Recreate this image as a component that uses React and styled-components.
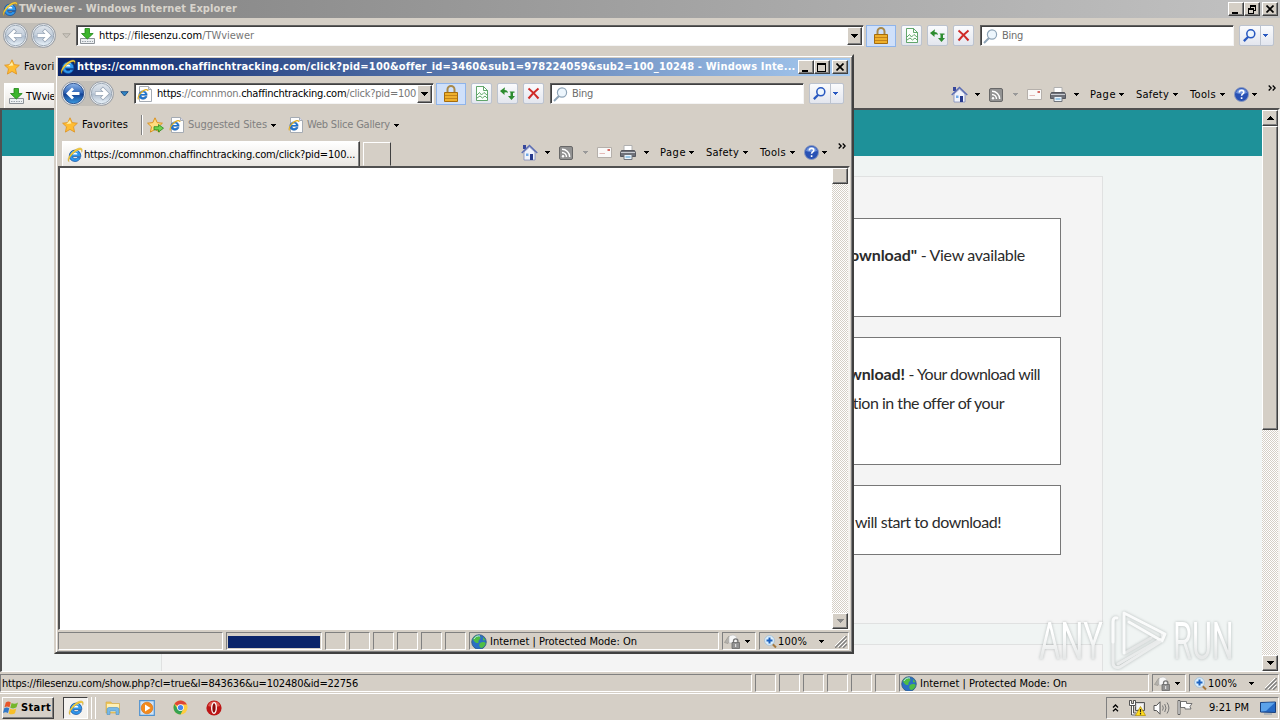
import React, { useLayoutEffect, useRef } from "react";
import styled, { createGlobalStyle, css } from "styled-components";

const FACE = "#d5cfc6";
const UI = `"DejaVu Sans Condensed", "DejaVu Sans", sans-serif`;

const Global = createGlobalStyle`
  * { box-sizing: border-box; }
  html, body { margin: 0; padding: 0; overflow: hidden; background: ${FACE}; }
  svg { display: block; flex: none; }
`;

/* ---------- text ---------- */
const TextSpan = styled.span`
  display: inline-block;
  white-space: pre;
  flex: none;
  color: ${(p) => p.$color || "inherit"};
  font-weight: ${(p) => (p.$bold ? 700 : "inherit")};
`;

function Text({ width, children, color, bold }) {
  const ref = useRef(null);
  useLayoutEffect(() => {
    const el = ref.current;
    el.style.letterSpacing = "0px";
    const natural = el.getBoundingClientRect().width;
    el.style.letterSpacing = `${(width - natural) / el.textContent.length}px`;
  }, [width]);
  return (
    <TextSpan ref={ref} $color={color} $bold={bold}>
      {children}
    </TextSpan>
  );
}

/* ---------- bevels ---------- */
const raised = css`
  border: 1px solid;
  border-color: #fff #404040 #404040 #fff;
  box-shadow: inset -1px -1px 0 #808080;
`;
const sunken = css`
  border: 1px solid;
  border-color: #808080 #fff #fff #808080;
`;

/* ---------- layout parts ---------- */
const Desktop = styled.div`
  position: relative;
  width: 1280px;
  height: 720px;
  overflow: hidden;
  display: flex;
  flex-direction: column;
  background: ${FACE};
  font: 11px/14px ${UI};
  color: #000;
`;
const PopupFrame = styled.div`
  position: absolute;
  left: 54px;
  top: 54px;
  width: 800px;
  height: 600px;
  padding: 2px;
  background: ${FACE};
  border: 2px solid;
  border-color: ${FACE} #404040 #404040 ${FACE};
  box-shadow: inset 1px 1px 0 #fff, inset -1px -1px 0 #808080;
`;
const Window = styled.div`
  display: flex;
  flex-direction: column;
  width: 100%;
  height: ${(p) => p.$height}px;
  background: ${FACE};
`;
const TitleBar = styled.div`
  display: flex;
  align-items: center;
  height: 18px;
  flex: none;
  padding: 0 2px;
  color: ${(p) => (p.$active ? "#fff" : "#d8d4cc")};
  background: ${(p) =>
    p.$active ? "linear-gradient(90deg,#0a246a,#a6caf0)" : "linear-gradient(90deg,#808080,#c2c2c2)"};
`;
const TitleText = styled.div`
  flex: 1;
  margin-left: 1px;
`;
const CaptionButton = styled.div`
  ${raised}
  width: 16px;
  height: 14px;
  margin-left: ${(p) => p.$gap || 0}px;
  background: ${FACE};
  display: flex;
  align-items: center;
  justify-content: center;
`;
const NavRow = styled.div`
  display: flex;
  align-items: center;
  height: 34px;
  flex: none;
  padding: 1px 6px 0 3px;
`;
const TravelButtons = styled.div`
  width: 53px;
  display: flex;
  gap: 3px;
  border-radius: 13px;
  background: #c3bfb8;
`;
const RecentArrow = styled.div`
  width: 20px;
  display: flex;
  justify-content: center;
`;
const Field = styled.div`
  display: flex;
  align-items: center;
  height: 21px;
  background: #fff;
  border: 1px solid;
  border-color: #606060 #f4f4f4 #f4f4f4 #606060;
  box-shadow: inset 1px 1px 0 #404040;
`;
const AddressField = styled(Field)`
  flex: 1;
  min-width: 0;
  padding: 1px 1px 0 2px;
`;
const AddressText = styled.div`
  flex: 1;
  margin-left: ${(p) => p.$gap}px;
  overflow: hidden;
  min-width: 0;
`;
const DropButton = styled.div`
  ${raised}
  width: 15px;
  height: 18px;
  background: ${FACE};
  display: flex;
  align-items: center;
  justify-content: center;
`;
const LockButton = styled.div`
  width: 30px;
  height: 22px;
  margin: 0 5px 0 2px;
  border: 1px solid #8fb4ea;
  background: #cfe0fa;
  display: flex;
  align-items: center;
  justify-content: center;
`;
const ToolButton = styled.div`
  width: 21px;
  height: 21px;
  margin-right: ${(p) => p.$gap ?? 5}px;
  border: 1px solid #bcc3cf;
  border-radius: 2px;
  background: linear-gradient(#fafbfd, #e3e6ee);
  display: flex;
  align-items: center;
  justify-content: center;
`;
const SearchField = styled(Field)`
  width: 254px;
  padding: 1px 0 0 2px;
  color: #6d6d6d;
  gap: 4px;
`;
const SearchButton = styled(ToolButton)`
  width: 35px;
  margin: 0 0 0 5px;
  justify-content: space-between;
  padding: 0 5px 0 3px;
  background: linear-gradient(90deg, transparent 20px, #bcc3cf 20px 21px, transparent 21px), linear-gradient(#fafbfd, #e3e6ee);
`;
const FavRow = styled.div`
  display: flex;
  align-items: center;
  height: 30px;
  flex: none;
  padding-left: 4px;
  color: #000;
`;
const FavItem = styled.div`
  display: flex;
  align-items: center;
  gap: ${(p) => p.$gap ?? 4}px;
  margin-right: ${(p) => p.$after || 0}px;
`;
const Divider = styled.div`
  width: 2px;
  height: 20px;
  margin-right: 4px;
  border-left: 1px solid #808080;
  border-right: 1px solid #fff;
`;
const TabRow = styled.div`
  display: flex;
  align-items: flex-end;
  justify-content: space-between;
  height: 26px;
  flex: none;
  padding-left: 4px;
`;
const Tabs = styled.div`
  display: flex;
  align-items: flex-end;
  gap: 3px;
`;
const Tab = styled.div`
  width: 298px;
  height: 25px;
  display: flex;
  align-items: center;
  gap: ${(p) => p.$gap}px;
  padding: 1px 0 0 ${(p) => p.$pad}px;
  background: linear-gradient(#fff, #e9e6e1);
  border: 1px solid;
  border-bottom: 0;
  border-color: #fff #404040 #fff #fff;
  box-shadow: inset -1px 0 0 #808080;
`;
const NewTab = styled.div`
  width: 28px;
  height: 24px;
  border: 1px solid;
  border-color: #fff #404040 transparent #fff;
`;
const CommandBar = styled.div`
  display: flex;
  align-items: center;
  height: 26px;
  padding: 0 4px 1px 0;
`;
const Command = styled.div`
  display: flex;
  align-items: center;
  justify-content: space-between;
  width: ${(p) => p.$width}px;
  margin-right: ${(p) => p.$after}px;
`;
const Overflow = styled.div`
  align-self: flex-start;
  padding-top: 3px;
`;
const Content = styled.div`
  flex: 1;
  display: flex;
  min-height: 0;
  border: 2px solid;
  border-bottom-width: 1px;
  border-color: #505050 #f4f2ee #fff #505050;
  background: #fff;
`;
const View = styled.div`
  flex: 1;
  overflow: hidden;
  min-width: 0;
`;
const Track = styled.div`
  width: 16px;
  display: flex;
  flex-direction: column;
  background: conic-gradient(#fff 25%, ${FACE} 0 50%, #fff 0 75%, ${FACE} 0) 0 0 / 2px 2px;
`;
const ScrollButton = styled.div`
  ${raised}
  height: ${(p) => p.$height || 16}px;
  margin-top: ${(p) => (p.$end ? "auto" : 0)};
  background: ${FACE};
  display: flex;
  align-items: center;
  justify-content: center;
  flex: none;
`;
const StatusBar = styled.div`
  display: flex;
  gap: 3px;
  height: 20px;
  padding: 2px 1px 0 0;
  flex: none;
`;
const Pane = styled.div`
  ${sunken}
  height: 18px;
  display: flex;
  align-items: center;
  flex: none;
  width: ${(p) => p.$width}px;
  padding: 1px 1px 0;
  ${(p) => p.$grow && "flex: 1;"}
  overflow: hidden;
  gap: ${(p) => p.$gap || 0}px;
`;
const Spacer = styled.div`
  flex: 1;
  max-width: ${(p) => p.$max || 40}px;
`;
const Progress = styled.div`
  width: 92px;
  height: 12px;
  background: #0a246a;
`;

/* ---------- web page ---------- */
const Page = styled.div`
  height: 561px;
  background: #f0f4f3;
  display: flex;
  flex-direction: column;
  align-items: center;
  overflow: hidden;
`;
const Banner = styled.div`
  width: 100%;
  height: 46px;
  flex: none;
  background: #1e9199;
  margin-bottom: 20px;
`;
const Panel = styled.div`
  width: 942px;
  height: ${(p) => p.$height}px;
  flex: none;
  margin-bottom: 20px;
  padding: 41px 41px 0;
  background: #f4f4f4;
  border: 1px solid #e0e1e1;
  display: flex;
  flex-direction: column;
  gap: 20px;
`;
const Step = styled.div`
  height: ${(p) => p.$height}px;
  border: 1px solid #777;
  background: #fff;
  padding-top: 21px;
  display: flex;
  flex-direction: column;
  font: 16px/29px Lato, sans-serif;
  color: #2b2b2b;
`;
const Line = styled.div`
  display: flex;
  justify-content: flex-end;
  padding-right: ${(p) => p.$right}px;
`;

/* ---------- taskbar ---------- */
const Taskbar = styled.div`
  height: 27px;
  margin-top: 1px;
  border-top: 1px solid #fff;
  display: flex;
  align-items: center;
  padding: 1px 1px 0 2px;
`;
const StartButton = styled.div`
  ${raised}
  width: 52px;
  height: 22px;
  display: flex;
  align-items: center;
  gap: 1px;
`;
const RunningApp = styled.div`
  ${sunken}
  border-color: #404040 #fff #fff #404040;
  width: 25px;
  height: 22px;
  margin-left: 9px;
  background: #f4f2ef;
  display: flex;
  align-items: center;
  justify-content: center;
`;
const Stack = styled.div`
  width: 4px;
  height: 22px;
  border-right: 1px solid #fff;
`;
const Launchers = styled.div`
  display: flex;
  align-items: center;
  gap: 18px;
  margin-left: 9px;
  flex: 1;
`;
const Tray = styled.div`
  ${sunken}
  width: 173px;
  height: 22px;
  display: flex;
  align-items: center;
  padding-left: 5px;
`;
const TrayItem = styled.div`
  width: ${(p) => p.$width}px;
  display: flex;
`;

/* ---------- watermark ---------- */
const Watermark = styled.div`
  position: absolute;
  left: 1039px;
  top: 608px;
  display: flex;
  align-items: center;
  height: 66px;
  filter: drop-shadow(0 0 1.5px rgba(70, 80, 80, 0.35));
`;
const MarkWord = styled.div`
  width: ${(p) => p.$width}px;
  padding-top: 2px;
  font: 400 52px/66px Roboto, sans-serif;
  white-space: nowrap;
  transform: scaleX(${(p) => p.$scale});
  transform-origin: left center;
`;
const MarkText = styled.span`
  color: transparent;
  background: linear-gradient(#fff 35%, #e6e8e8 75%);
  background-clip: text;
`;

/* ---------- icons ---------- */
const Caret = ({ color = "#000", up = false, size = 7 }) => (
  <svg width={size} height="4" viewBox="0 0 7 4" shapeRendering="crispEdges">
    <path d={up ? "M0 4h7L3.5 0z" : "M0 0h7L3.5 4z"} fill={color} />
  </svg>
);
const SmallCaret = ({ color = "#000" }) => (
  <svg width="5" height="3" viewBox="0 0 5 3" shapeRendering="crispEdges">
    <path d="M0 0h5v1H4v1H3v1H2V2H1V1H0z" fill={color} />
  </svg>
);
const RecentCaret = ({ active }) => (
  <svg width="9" height="6" viewBox="0 0 9 6">
    <path d="M.8.7h7.400L4.500 5z" fill={active ? "#2f86c6" : "#c9c5bd"} stroke={active ? "#174a80" : "#aaa69e"} strokeWidth=".9" />
  </svg>
);

const IEGlyph = ({ size = 16 }) => (
  <svg width={size} height={size} viewBox="0 0 16 16">
    <path
      d="M13.800 9.600H5.600c.2 1.400 1.200 2.200 2.500 2.200 1 0 1.800-.4 2.200-1.200h3.200c-.8 2.400-2.800 3.900-5.400 3.900-3.400 0-5.800-2.400-5.800-5.700S4.800 3.100 8.100 3.100s5.700 2.300 5.700 5.700z"
      fill="#2f97ec"
      stroke="#0c4a9e"
      strokeWidth=".7"
    />
    <path d="M5.700 7.500c.3-1.200 1.200-1.900 2.400-1.900s2.100.7 2.300 1.900z" fill="#fff" />
    <path d="M4.200 7c1-2.600 3.700-3.600 6.400-2.300" stroke="#a4ddff" fill="none" />
    <path
      d="M2.200 14.800C-.3 13.500 1.600 8.600 5.500 4.900 9.300 1.300 13.700-.2 14.900 1.800c.5.900.3 2.200-.2 3.500.2-1.400 0-2.400-1-2.600-1.800-.4-5 1.300-7.800 4.200-3.300 3.400-4.900 7-3.700 7.900z"
      fill="#fad03a"
      stroke="#a87d10"
      strokeWidth=".3"
    />
  </svg>
);
const IEPage = () => (
  <svg width="15" height="16" viewBox="0 0 15 16">
    <path d="M2.500.5h9l3 3v12h-12z" fill="#fdfdfd" stroke="#a5abb3" />
    <path d="M11.500.5v3h3" fill="#dde" stroke="#a5abb3" />
    <path
      d="M10.200 9.300H4c0 1.300.9 2.200 2 2.200.8 0 1.400-.3 1.800-1h2.200c-.5 1.800-2 2.800-4 2.800-2.400 0-4.200-1.700-4.200-4.200S3.600 4.900 6 4.900s4.200 1.700 4.200 4.400z"
      fill="#1f78d4"
      stroke="#15559f"
      strokeWidth=".5"
    />
    <path d="M4 7.900c.3-.9 1-1.300 2-1.300s1.700.5 1.900 1.300z" fill="#fff" />
    <path d="M1.500 13.300c-1.300-1.500 1-5.300 3.500-7.500s5.600-3.100 6-.8" fill="none" stroke="#e3ae22" strokeWidth="1.200" />
  </svg>
);
const DownloadIcon = () => (
  <svg width="17" height="17" viewBox="0 0 17 17">
    <path d="M1.500 10.500h14v5h-14z" fill="#edf0f2" stroke="#8c9298" />
    <path d="M3 13.500h11" stroke="#9aa3aa" strokeDasharray="1.500 1" />
    <path d="M6 .5h4.500v5h3.700L8.300 11 2.500 5.500H6z" fill="#3cb52c" stroke="#1f8518" strokeWidth=".8" />
  </svg>
);
const Travel = ({ active, forward }) => {
  const id = active ? "travelOn" : "travelOff";
  return (
    <svg width="25" height="25" viewBox="0 0 25 25">
      <defs>
        <linearGradient id={id} x1="0" y1="0" x2="0" y2="1">
          <stop offset="0" stopColor={active ? "#8fb6ea" : "#dfe5ec"} />
          <stop offset=".48" stopColor={active ? "#2c62b4" : "#c3cedb"} />
          <stop offset=".52" stopColor={active ? "#123f92" : "#aebccd"} />
          <stop offset="1" stopColor={active ? "#3d9be0" : "#eaf3fa"} />
        </linearGradient>
      </defs>
      <circle cx="12.500" cy="12.500" r="11.900" fill="#edf0f3" stroke="#8d939c" strokeWidth=".9" />
      <circle cx="12.500" cy="12.500" r="10.200" fill={`url(#${id})`} stroke={active ? "#1b3f7d" : "#8c99a8"} strokeWidth=".8" />
      <g transform={forward ? "translate(25 0) scale(-1 1)" : undefined} fill="none">
        {!active && <path d="M19 12.500H8M12.500 7l-5.500 5.500 5.500 5.500" stroke="#94a1b2" strokeWidth="4" />}
        <path d="M18.500 12.500H8M12 7.500l-5 5 5 5" stroke="#fff" strokeWidth="2.800" />
      </g>
    </svg>
  );
};
const LockIcon = () => (
  <svg width="14" height="17" viewBox="0 0 14 17">
    <path d="M3.500 8V4.500a3.500 3.500 0 0 1 7 0V8" fill="none" stroke="#a8894a" strokeWidth="2" />
    <path d="M.5 7.500h13v9H.5z" fill="#eeb02c" stroke="#a56c0d" />
    <path d="M1 10.500h12M1 13.500h12" stroke="#c4831a" />
  </svg>
);
const CompatIcon = () => (
  <svg width="12" height="15" viewBox="0 0 12 15" fill="none" stroke="#3c9148">
    <path d="M.5.5h7l4 4v10H.5z" fill="#fafffa" strokeWidth=".8" />
    <path d="M7.500.5v4h4M1 9l2.500-2.500 2 2.500L8 6.500 11 9M1 12l3-2 2.500 2L9 10l2 2" strokeWidth=".8" />
  </svg>
);
const RefreshIcon = () => (
  <svg width="15" height="15" viewBox="0 0 15 15" fill="#2c8c2f">
    <path d="M5 1.200L0 5l4.500 4V6.500q2.500-.5 3.500.5-.3-3-3.500-3z" />
    <path d="M9.500 5.500h5v1.300H13V10h2l-3.500 4L8 10h2.500V6.800z" />
  </svg>
);
const StopIcon = () => (
  <svg width="13" height="13" viewBox="0 0 13 13">
    <path d="M1.500 1.500q5 4 10 10M11.500 1.500q-5.500 4.500-10 10" stroke="#cf2a27" strokeWidth="2" fill="none" />
  </svg>
);
const Magnifier = ({ color = "#8fa5b8", size = 15, width = 1.2 }) => (
  <svg width={size} height={size} viewBox="0 0 15 15" fill="none">
    <circle cx="9" cy="5.500" r="4.600" fill="#edf6fd" stroke={color} strokeWidth={width} />
    <path d="M6 9l-5 5" stroke={color} strokeWidth={width + 0.8} />
  </svg>
);
const StarIcon = () => (
  <svg width="16" height="16" viewBox="0 0 16 16">
    <path
      d="M8 .8l2.200 4.800 5.200.6-3.900 3.600 1.100 5.300L8 12.400l-4.600 2.700 1.100-5.300L.6 6.200l5.200-.6z"
      fill="#ffbd32"
      stroke="#de9220"
      strokeWidth=".8"
    />
    <path d="M8 3l1.400 3.400-5 .6" fill="#fff0a8" />
  </svg>
);
const AddStarIcon = () => (
  <svg width="17" height="16" viewBox="0 0 17 16">
    <path d="M8 .8l2.200 4.800 5.200.6-3.900 3.600 1.100 5.300L8 12.400l-4.600 2.700 1.100-5.300L.6 6.200l5.200-.6z" fill="#ffdc80" stroke="#d98a12" strokeWidth=".9" />
    <path d="M7 9.700h4.500V7.500l5 3.700-5 3.800v-2.200H7z" fill="#6fd24e" stroke="#2a8a1c" strokeWidth=".8" />
  </svg>
);
const HomeIcon = () => (
  <svg width="17" height="17" viewBox="0 0 17 17">
    <path d="M2 1h3v4H2z" fill="#37479c" />
    <path d="M3 8l5.500-5L14 8v8H3z" fill="#f1f3fb" stroke="#7e8bbd" strokeWidth=".8" />
    <path d="M.7 9L8.500 1.500 16.300 9" fill="none" stroke="#5a6cb5" strokeWidth="1.300" />
    <path d="M9 10h3v6H9z" fill="#26398d" />
    <path d="M5 9.500h2.500V12H5z" fill="#6fa8e8" />
  </svg>
);
const FeedIcon = () => (
  <svg width="14" height="14" viewBox="0 0 14 14">
    <rect x=".5" y=".5" width="13" height="13" rx="1.500" fill="#929292" stroke="#686868" />
    <path d="M3 6.500a4.500 4.500 0 0 1 4.500 4.500M3 3.300A7.700 7.700 0 0 1 10.700 11" fill="none" stroke="#fff" strokeWidth="1.400" />
    <circle cx="4" cy="10.200" r="1.200" fill="#fff" />
  </svg>
);
const MailIcon = () => (
  <svg width="15" height="11" viewBox="0 0 15 11">
    <path d="M.5.5h14v10H.5z" fill="#faf9f8" stroke="#b5b0ab" />
    <path d="M10.500 2h2.500v2h-2.500z" fill="#d66b64" />
    <path d="M2.500 6.500H8" stroke="#e3b9b6" />
  </svg>
);
const PrinterIcon = () => (
  <svg width="16" height="15" viewBox="0 0 16 15">
    <path d="M4 .5h8v5H4z" fill="#fff" stroke="#b0b0b0" />
    <path d="M1.500 5.500h13l1 2v4H.5v-4z" fill="#6e7078" stroke="#55575e" />
    <path d="M1 7.500h14" stroke="#c9ccd2" />
    <path d="M4 9.500h8v5H4z" fill="#eaf3fb" stroke="#70747c" />
    <path d="M5.500 12h5" stroke="#4b9bd1" />
  </svg>
);
const HelpIcon = () => (
  <svg width="15" height="15" viewBox="0 0 15 15">
    <circle cx="7.500" cy="7.500" r="7" fill="#2851b4" stroke="#8b9ac0" />
    <path d="M2 6a5.700 5.700 0 0 1 11 0q-5.500 2-11 0z" fill="#6d92dc" />
    <path d="M5.300 5.500c0-3 4.500-2.700 4.500-.2 0 1.600-2.200 1.700-2.200 3.400M7.600 10.200v1.900" fill="none" stroke="#fff" strokeWidth="1.600" />
  </svg>
);
const ChevronsRight = () => (
  <svg width="8" height="6" viewBox="0 0 8 6" fill="none" stroke="#000" strokeWidth="1.300">
    <path d="M.7.5L3.200 3 .7 5.500M4.700.5L7.200 3 4.700 5.500" />
  </svg>
);
const GlobeIcon = () => (
  <svg width="16" height="16" viewBox="0 0 16 16">
    <circle cx="8" cy="8" r="7.300" fill="#2b6fc4" stroke="#345a7c" strokeWidth=".8" />
    <path d="M3 3.500C6 0 9 2 9.500 3.500S7 6 7.500 8 4 9 3 7 1.500 5.500 3 3.500zM9 9c2-1.500 5-1 5.500 0s-2 5-4 5-3-3.500-1.500-5zM12 3l2.500 3-2.500.5z" fill="#4fbd45" />
    <path d="M3 5c1-2.500 4-3.500 6-3" stroke="#bde7f7" fill="none" />
  </svg>
);
const PrivacyIcon = () => (
  <svg width="16" height="15" viewBox="0 0 16 15">
    <path d="M.5 8.500L4.500 2.500l2.500 2-3 5z" fill="#b4b1ac" stroke="#9a9791" strokeWidth=".7" />
    <path d="M5 9V3q1-2 4-2 3.500 0 4 4v4z" fill="#f7f7f7" stroke="#bbb" strokeWidth=".6" />
    <path d="M9.500 9V7a2.200 2.200 0 0 1 4.400 0v2" fill="none" stroke="#777" strokeWidth="1.300" />
    <path d="M8 8.500h7.500v6H8z" fill="#929292" stroke="#6a6a6a" strokeWidth=".8" />
    <path d="M11.700 10v3" stroke="#eee" />
  </svg>
);
const ZoomIcon = () => (
  <svg width="13" height="14" viewBox="0 0 13 14">
    <path d="M8 8.500l4 4" stroke="#a6783d" strokeWidth="2" />
    <circle cx="5.500" cy="5.500" r="4.900" fill="#dceffd" stroke="#9dbbd4" strokeWidth=".8" />
    <path d="M5.500 2.500v6M2.500 5.500h6" stroke="#1d62c0" strokeWidth="2" />
  </svg>
);
const GripIcon = () => (
  <svg width="12" height="12" viewBox="0 0 12 12">
    <path d="M0 12L12 0M4 12l8-8M8 12l4-4" stroke="#fff" transform="translate(-1 -1)" />
    <path d="M0 12L12 0M4 12l8-8M8 12l4-4" stroke="#808080" strokeWidth="1.400" />
  </svg>
);
const WindowsFlag = () => (
  <svg width="17" height="16" viewBox="0 0 17 16">
    <path d="M2.800 2.500q2.500-2 5 0L6.500 7.300q-2.500-1.700-5 0z" fill="#e8562a" />
    <path d="M8.600 3q3 1.600 6.400-.5L13.500 7.300q-3 2-6.200.4z" fill="#73b62c" />
    <path d="M1.200 8.300q2.500-1.700 5 0L5 13q-2.500-1.700-5 0z" fill="#3178c8" />
    <path d="M7 8.700q3 1.700 6.200-.3L12 13.200q-3 2-6.300.2z" fill="#f7bf28" />
  </svg>
);
const FolderIcon = () => (
  <svg width="16" height="16" viewBox="0 0 16 16">
    <path d="M1 2h5l1 1.500h7.500V13H1z" fill="#edc65c" stroke="#d4a944" strokeWidth=".6" />
    <path d="M2 4h12v8H2z" fill="#fff0b4" />
    <path d="M2 14.500v-5q0-2 2-2h8q2 0 2 2v5h-3V11H5v3.500z" fill="#78b9e6" stroke="#4d90c4" strokeWidth=".6" />
  </svg>
);
const MediaIcon = () => (
  <svg width="16" height="16" viewBox="0 0 16 16">
    <path d="M.7.7h14.600v14.600H.7z" fill="#cfe3f6" stroke="#4f92d0" strokeWidth="1.200" />
    <circle cx="8" cy="8" r="5.800" fill="#f38a1c" stroke="#d76c0a" strokeWidth=".6" />
    <path d="M6 4.500L11.500 8 6 11.500z" fill="#fff" />
  </svg>
);
const ChromeIcon = () => (
  <svg width="15" height="15" viewBox="0 0 16 16">
    <circle cx="8" cy="8" r="7.500" fill="#ffcd40" />
    <path d="M8 8L1.500 4.300A7.500 7.500 0 0 1 14.500 4.300L14.700 4.700H8z" fill="#de4537" />
    <path d="M1.500 4.300A7.500 7.500 0 0 0 8 15.500L11 9.700 8 8 5 9.500z" fill="#36a352" />
    <circle cx="8" cy="8" r="3.600" fill="#fff" />
    <circle cx="8" cy="8" r="2.800" fill="#4687ee" />
  </svg>
);
const OperaIcon = () => (
  <svg width="16" height="16" viewBox="0 0 16 16">
    <circle cx="8" cy="8" r="7.600" fill="#bd1616" />
    <path d="M2 6a6.300 6.300 0 0 1 12 0q-6 2-12 0z" fill="#e05a50" />
    <ellipse cx="8" cy="8" rx="2.300" ry="5.300" fill="#8c0a0a" stroke="#fff" strokeWidth="1.300" />
  </svg>
);
const ChevronsUp = () => (
  <svg width="7" height="8" viewBox="0 0 7 8" fill="none" stroke="#000" strokeWidth="1.300">
    <path d="M1 3.500L3.500 1 6 3.500M1 7.300l2.500-2.500L6 7.300" />
  </svg>
);
const NetworkIcon = () => (
  <svg width="17" height="16" viewBox="0 0 17 16">
    <path d="M6.500 2.500h9v8h-9z" fill="#d8d8d8" stroke="#555" />
    <path d="M8 4h6v5H8z" fill="#f4f4f4" />
    <path d="M1.500 1v4h4V1M3.500 4.500v10h5" fill="none" stroke="#fff" strokeWidth="2.500" />
    <path d="M.5.500v5h6v-5h-2v3h-2v-3zM2.500 5.500v9.500h5M4.500 5.500V13H7" fill="none" stroke="#444" strokeWidth=".9" />
    <path d="M11.500 6.500l5 9h-10z" fill="#ffdc20" stroke="#af8b00" strokeWidth=".7" />
    <path d="M11.500 9v3.200M11.500 13v1.500" stroke="#222" strokeWidth="1.200" />
  </svg>
);
const SpeakerIcon = () => (
  <svg width="17" height="14" viewBox="0 0 17 14" fill="none">
    <path d="M1 4.500h2.500L7 .8v12.400L3.500 9.500H1z" fill="#fff" stroke="#555" />
    <path d="M9.500 4.500q1.600 2.500 0 5M11.700 3q2.600 4 0 8M14 1.500q3.800 5.500 0 11" stroke="#777" />
  </svg>
);
const FlagIcon = () => (
  <svg width="16" height="15" viewBox="0 0 16 15">
    <path d="M3.500 1.500h6v2h5.500l-2 3 1 2.500H8v-1.500H3.500z" fill="#fff" stroke="#666" strokeWidth=".9" />
    <path d="M1 .5h2v14H1z" fill="#fff" stroke="#555" strokeWidth=".9" />
  </svg>
);
const ScreenIcon = () => (
  <svg width="16" height="14" viewBox="0 0 16 14">
    <path d="M.5 1.500l15-.5v10.500L.5 11z" fill="#2569c4" stroke="#173f7d" />
    <path d="M1 2l14-.5-9 8.500-5 .5z" fill="#5ba2ea" />
    <path d="M4 13h8" stroke="#89a" />
  </svg>
);
const MinimizeGlyph = () => (
  <svg width="10" height="9" viewBox="0 0 10 9" shapeRendering="crispEdges">
    <path d="M1 7h6v2H1z" />
  </svg>
);
const MaximizeGlyph = () => (
  <svg width="10" height="9" viewBox="0 0 10 9" shapeRendering="crispEdges">
    <path d="M0 0h9v9H0zM1 2v6h7V2z" fillRule="evenodd" />
  </svg>
);
const RestoreGlyph = () => (
  <svg width="10" height="9" viewBox="0 0 10 9" shapeRendering="crispEdges">
    <path d="M3 0h6v6H7V5h1V2H4v1H3zM1 3h6v6H1zM2 5v3h4V5z" fillRule="evenodd" />
  </svg>
);
const CloseGlyph = () => (
  <svg width="8" height="8" viewBox="0 0 8 8">
    <path d="M.5.5l7 7M7.500.5l-7 7" stroke="#000" strokeWidth="1.700" />
  </svg>
);
const PlayMark = () => (
  <svg width="69" height="66" viewBox="0 0 69 66" fill="none" strokeLinejoin="round" strokeLinecap="round">
    <path d="M14 56L59 30 58 26" stroke="#e9ebeb" strokeWidth="3" />
    <path d="M21 45l26-15" stroke="#e4e6e6" strokeWidth="3" />
    <path d="M20 45V5l41 21-3 7L25 14" stroke="#fafbfb" strokeWidth="3" />
    <path d="M10 11q-1-1-1 3v40q0 7 7 5L56 34" stroke="#ebeded" strokeWidth="3" />
    <path d="M13 10q-4-1-4 4v20" stroke="#fafbfb" strokeWidth="3" />
  </svg>
);

/* ---------- composed parts ---------- */
function Status({ url, progress }) {
  return (
    <StatusBar>
      {progress ? <Pane $width={165} /> : <Pane $grow><Text width={356}>{url}</Text></Pane>}
      {progress && <Pane $grow><Progress /></Pane>}
      {[0, 1, 2, 3, 4, 5].map((i) => (
        <Pane key={i} $width={21} />
      ))}
      <Pane $width={250} $gap={3}>
        <GlobeIcon />
        <Text width={147}>Internet | Protected Mode: On</Text>
      </Pane>
      <Pane $width={34} $gap={5}>
        <PrivacyIcon />
        <SmallCaret />
      </Pane>
      <Pane $width={90} $gap={1}>
        <Spacer $max={2} />
        <ZoomIcon />
        <Text width={29}>100%</Text>
        <Spacer />
        <SmallCaret />
        <Spacer $max={9} />
        <GripIcon />
      </Pane>
    </StatusBar>
  );
}

function Browser({ active, height, title, titleWidth, icon, address, addressGap, links, tab, maximized, canGoBack, scroll, status, children }) {
  return (
    <Window $height={height}>
      <TitleBar $active={active}>
        <IEGlyph />
        <TitleText>
          <Text width={titleWidth} bold>{title}</Text>
        </TitleText>
        <CaptionButton><MinimizeGlyph /></CaptionButton>
        <CaptionButton>{maximized ? <RestoreGlyph /> : <MaximizeGlyph />}</CaptionButton>
        <CaptionButton $gap={2}><CloseGlyph /></CaptionButton>
      </TitleBar>
      <NavRow>
        <TravelButtons>
          <Travel active={canGoBack} />
          <Travel forward />
        </TravelButtons>
        <RecentArrow><RecentCaret active={canGoBack} /></RecentArrow>
        <AddressField>
          {icon}
          <AddressText $gap={addressGap}>{address}</AddressText>
          <DropButton><Caret /></DropButton>
        </AddressField>
        <LockButton><LockIcon /></LockButton>
        <ToolButton><CompatIcon /></ToolButton>
        <ToolButton><RefreshIcon /></ToolButton>
        <ToolButton $gap={6}><StopIcon /></ToolButton>
        <SearchField>
          <Magnifier />
          <Text width={21}>Bing</Text>
        </SearchField>
        <SearchButton>
          <Magnifier color="#2858c0" size={13} width={1.8} />
          <SmallCaret color="#2858c0" />
        </SearchButton>
      </NavRow>
      <FavRow>
        <FavItem $after={13}><StarIcon /><Text width={46}>Favorites</Text></FavItem>
        {links}
      </FavRow>
      <TabRow>
        <Tabs>
          {tab}
          <NewTab />
        </Tabs>
        <CommandBar>
          <Command $width={29} $after={9}><HomeIcon /><SmallCaret /></Command>
          <Command $width={29} $after={9}><FeedIcon /><SmallCaret color="#999" /></Command>
          <Command $width={15} $after={8}><MailIcon /></Command>
          <Command $width={29} $after={11}><PrinterIcon /><SmallCaret /></Command>
          <Command $width={34} $after={12}><Text width={26}>Page</Text><SmallCaret /></Command>
          <Command $width={42} $after={12}><Text width={33}>Safety</Text><SmallCaret /></Command>
          <Command $width={35} $after={9}><Text width={26}>Tools</Text><SmallCaret /></Command>
          <Command $width={23} $after={11}><HelpIcon /><SmallCaret /></Command>
          <Overflow><ChevronsRight /></Overflow>
        </CommandBar>
      </TabRow>
      <Content>
        <View>{children}</View>
        <Track>
          <ScrollButton>{scroll && <Caret up />}</ScrollButton>
          {scroll && <ScrollButton $height={304} />}
          <ScrollButton $end><Caret color={scroll ? "#000" : "#888"} /></ScrollButton>
        </Track>
      </Content>
      {status}
    </Window>
  );
}

const FavoriteLinks = () => (
  <>
    <Divider />
    <FavItem $after={5}><AddStarIcon /></FavItem>
    <FavItem $after={12}>
      <IEPage />
      <Text width={79} color="#808080">Suggested Sites</Text>
      <SmallCaret />
    </FavItem>
    <FavItem>
      <IEPage />
      <Text width={83} color="#808080">Web Slice Gallery</Text>
      <SmallCaret />
    </FavItem>
  </>
);

export default function App() {
  return (
    <>
      <Global />
      <Desktop>
        <Browser
          height={692}
          title="TWviewer - Windows Internet Explorer"
          titleWidth={218}
          maximized
          scroll
          icon={<DownloadIcon />}
          addressGap={3}
          address={
            <Text width={155} color="#777">
              <TextSpan $color="#000">https</TextSpan>://<TextSpan $color="#000">filesenzu.com</TextSpan>/TWviewer
            </Text>
          }
          tab={
            <Tab $pad={3} $gap={1}>
              <DownloadIcon />
              <Text width={47}>TWviewer</Text>
            </Tab>
          }
          status={<Status url="https://filesenzu.com/show.php?cl=true&l=843636&u=102480&id=22756" />}
        >
          <Page>
            <Banner />
            <Panel $height={448}>
              <Step $height={99}>
                <Line $right={35}>
                  <Text width={79} bold>Download"</Text>
                  <Text width={108}> - View available</Text>
                </Line>
              </Step>
              <Step $height={128}>
                <Line $right={20}>
                  <Text width={77} bold>Download!</Text>
                  <Text width={135}> - Your download will</Text>
                </Line>
                <Line $right={56}>
                  <Text width={151}>tion in the offer of your</Text>
                </Line>
              </Step>
              <Step $height={70}>
                <Line $right={59}>
                  <Text width={146}>will start to download!</Text>
                </Line>
              </Step>
            </Panel>
            <Panel $height={80} />
          </Page>
        </Browser>
        <Taskbar>
          <StartButton>
            <WindowsFlag />
            <Text width={30} bold>Start</Text>
          </StartButton>
          <RunningApp><IEGlyph /></RunningApp>
          <Stack />
          <Stack />
          <Launchers>
            <FolderIcon />
            <MediaIcon />
            <ChromeIcon />
            <OperaIcon />
          </Launchers>
          <Tray>
            <TrayItem $width={17}><ChevronsUp /></TrayItem>
            <TrayItem $width={24}><NetworkIcon /></TrayItem>
            <TrayItem $width={24}><SpeakerIcon /></TrayItem>
            <TrayItem $width={32}><FlagIcon /></TrayItem>
            <TrayItem $width={51}><Text width={40}>9:21 PM</Text></TrayItem>
            <ScreenIcon />
          </Tray>
        </Taskbar>

        <PopupFrame>
          <Browser
            active
            canGoBack
            height={592}
            title="https://comnmon.chaffinchtracking.com/click?pid=100&offer_id=3460&sub1=978224059&sub2=100_10248 - Windows Inte..."
            titleWidth={717}
            icon={<IEPage />}
            addressGap={5}
            address={
              <Text width={259} color="#777">
                <TextSpan $color="#000">https</TextSpan>://comnmon.<TextSpan $color="#000">chaffinchtracking.com</TextSpan>/click?pid=100
              </Text>
            }
            links={<FavoriteLinks />}
            tab={
              <Tab $pad={4} $gap={1}>
                <IEGlyph />
                <Text width={271}>https://comnmon.chaffinchtracking.com/click?pid=100...</Text>
              </Tab>
            }
            status={<Status progress />}
          />
        </PopupFrame>

        <Watermark>
          <MarkWord $width={65} $scale={0.63}><MarkText>ANY</MarkText></MarkWord>
          <PlayMark />
          <MarkWord $width={60} $scale={0.59}><MarkText>RUN</MarkText></MarkWord>
        </Watermark>
      </Desktop>
    </>
  );
}
